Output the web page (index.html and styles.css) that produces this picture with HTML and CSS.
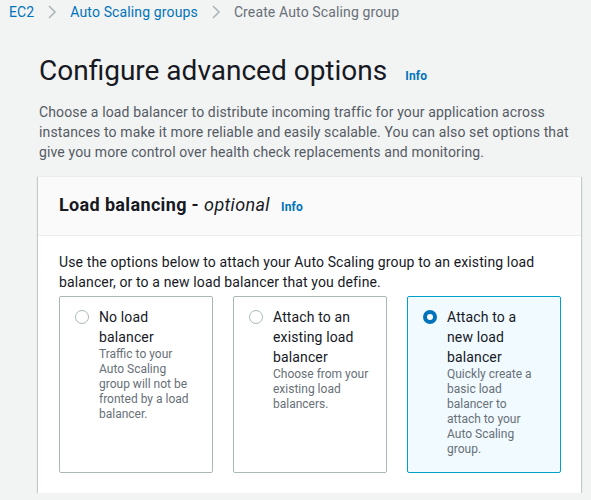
FILE: index.html
```html
<!DOCTYPE html>
<html lang="en">
<head>
<meta charset="utf-8">
<title>Create Auto Scaling group</title>
<link rel="stylesheet" href="styles.css">
</head>
<body>
<nav class="crumbs">
  <a class="crumb-link" href="#">EC2</a>
  <svg class="chev" viewBox="0 0 10 16" width="10" height="16"><path d="M2 2l6 6-6 6" fill="none" stroke="#aab7b8" stroke-width="1.6"/></svg>
  <a class="crumb-link" href="#">Auto Scaling groups</a>
  <svg class="chev" viewBox="0 0 10 16" width="10" height="16"><path d="M2 2l6 6-6 6" fill="none" stroke="#aab7b8" stroke-width="1.6"/></svg>
  <span class="crumb-current">Create Auto Scaling group</span>
</nav>
<main class="main">
  <h1 class="title">Configure advanced options <a class="info" href="#">Info</a></h1>
  <p class="lead">Choose a load balancer to distribute incoming traffic for your application across instances to make it more reliable and easily scalable. You can also set options that give you more control over health check replacements and monitoring.</p>
  <section class="card">
    <header class="card-head">
      <h2 class="card-title">Load balancing - <em>optional</em> <a class="info" href="#">Info</a></h2>
    </header>
    <div class="card-body">
      <p class="body-text">Use the options below to attach your Auto Scaling group to an existing load balancer, or to a new load balancer that you define.</p>
      <div class="tiles">
        <label class="tile">
          <span class="radio"></span>
          <span class="tile-text">
            <span class="tile-label">No load balancer</span>
            <span class="tile-desc">Traffic to your Auto Scaling group will not be fronted by a load balancer.</span>
          </span>
        </label>
        <label class="tile">
          <span class="radio"></span>
          <span class="tile-text">
            <span class="tile-label">Attach to an existing load balancer</span>
            <span class="tile-desc">Choose from your existing load balancers.</span>
          </span>
        </label>
        <label class="tile tile-selected">
          <span class="radio radio-on"></span>
          <span class="tile-text">
            <span class="tile-label">Attach to a new load balancer</span>
            <span class="tile-desc">Quickly create a basic load balancer to<br>attach to your Auto Scaling group.</span>
          </span>
        </label>
      </div>
    </div>
  </section>
</main>
</body>
</html>
```

FILE: styles.css
```css
* { box-sizing: border-box; }
html, body { margin: 0; padding: 0; }
body {
  background: #f2f3f3;
  font-family: Roboto, "Liberation Sans", sans-serif;
  font-size: 14px;
  line-height: 20px;
  letter-spacing: 0.13px;
  color: #16191f;
}
a { text-decoration: none; }
.crumbs {
  display: flex;
  align-items: center;
  gap: 13px;
  padding: 2px 9px 0;
  height: 22px;
}
.crumb-link { color: #0073bb; }
.crumb-current { color: #687078; }
.chev { flex: none; }
.main {
  padding: 0 10px 0 39px;
}
.title {
  margin: 31px 0 0;
  font-size: 28px;
  line-height: 36px;
  font-weight: 400;
  letter-spacing: 0;
  color: #16191f;
  display: flex;
  align-items: baseline;
  gap: 18px;
}
.info {
  color: #0073bb;
  font-size: 12px;
  font-weight: 700;
  font-style: normal;
  letter-spacing: 0.2px;
}
.lead {
  margin: 8px 0 0;
  color: #545b64;
  width: 542px;
}
.card {
  margin: 14px 0 0 -1px;
  width: 543px;
  background: #fff;
  border-top: 1px solid #eaeded;
  box-shadow: 0 1px 1px 0 rgba(0,28,36,.3), 1px 1px 1px 0 rgba(0,28,36,.15), -1px 1px 1px 0 rgba(0,28,36,.15);
}
.card-head {
  background: #fafafa;
  border-bottom: 1px solid #eaeded;
  padding: 17px 21px 17px;
}
.card-title {
  margin: 0;
  font-size: 18px;
  line-height: 22px;
  font-weight: 700;
  letter-spacing: 0.35px;
  display: flex;
  align-items: baseline;
}
.card-title em { font-weight: 400; font-style: italic; margin-left: 5px; margin-right: 11px; }
.card-body {
  padding: 16px 21px 20px;
}
.body-text { margin: 0; }
.tiles {
  display: grid;
  grid-template-columns: repeat(3, 154px);
  gap: 20px;
  margin-top: 4px;
}
.tile {
  display: flex;
  gap: 10px;
  height: 177px;
  padding: 10px 14px 10px 15px;
  border: 1px solid #aab7b8;
  border-radius: 2px;
}
.tile-selected {
  background: #f1faff;
  border-color: #00a1c9;
}
.radio {
  flex: none;
  width: 14px;
  height: 14px;
  margin-top: 3px;
  border: 1px solid #aab7b8;
  border-radius: 50%;
  background: #fff;
}
.radio-on {
  border: 4px solid #0073bb;
}
.tile-text { display: flex; flex-direction: column; }
.tile-label { color: #16191f; padding-right: 4px; }
.tile-desc {
  font-size: 12px;
  line-height: 15px;
  letter-spacing: 0;
  color: #687078;
}
```
